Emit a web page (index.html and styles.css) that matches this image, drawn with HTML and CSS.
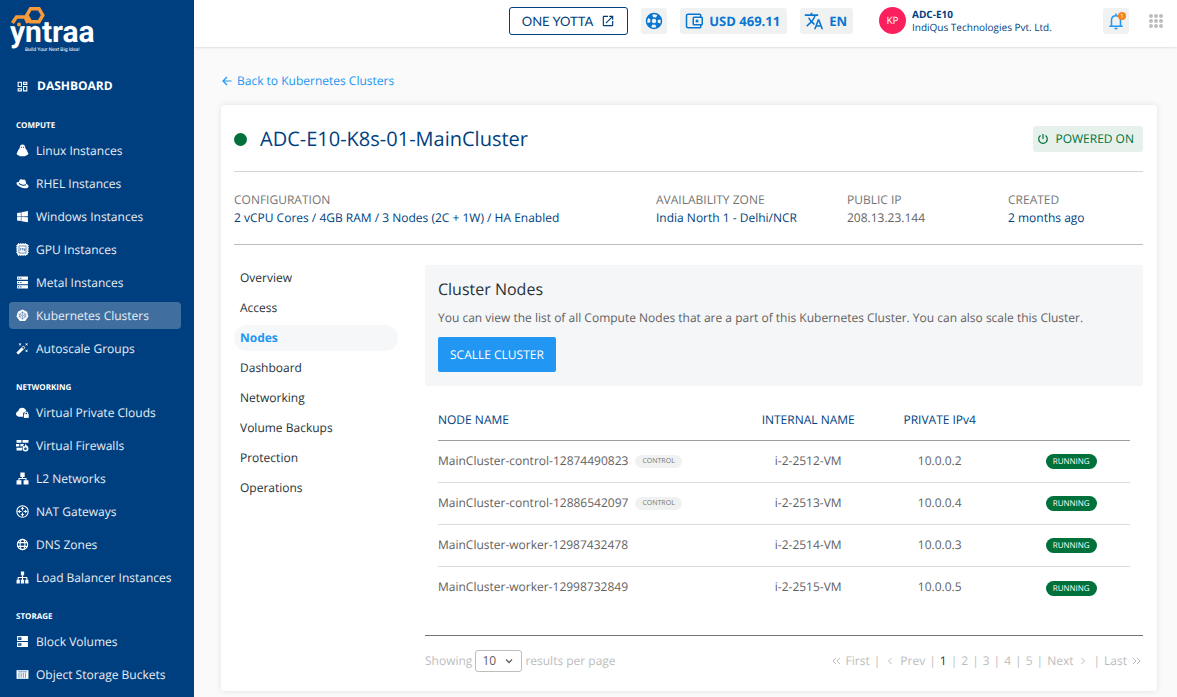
FILE: index.html
```html
<!DOCTYPE html>
<html lang="en">
<head>
<meta charset="utf-8">
<meta name="viewport" content="width=device-width, initial-scale=1">
<title>ADC-E10-K8s-01-MainCluster</title>
<link rel="stylesheet" href="styles.css">
</head>
<body>
<div class="app">
  <aside class="sidebar">
    <a class="logo" href="#" aria-label="yntraa home">
      <svg width="90" height="48" viewBox="0 0 90 48">
        <path d="M2.500 17 6.500 11H15L18 17" fill="none" stroke="#f79a3b" stroke-width="3.500"/>
        <path d="M20.500 2.700H29L32.800 9.200 29 15.700H20.500L16.800 9.200Z" fill="none" stroke="#f79a3b" stroke-width="3.500"/>
        <text class="logo-word" x="0" y="36">yntraa</text>
        <circle cx="9" cy="18.500" r="2" fill="#f79a3b"/>
        <text class="logo-tag" x="15" y="45">Build Your Next Big Idea!</text>
      </svg>
    </a>
    <a class="dash" href="#">
      <svg class="ico" viewBox="0 0 24 24"><path d="M19 5V7H15V5H19M9 5V11H5V5H9M19 13V19H15V13H19M9 17V19H5V17H9M21 3H13V9H21V3M11 3H3V13H11V3M21 11H13V21H21V11M11 15H3V21H11V15Z"/></svg>
      DASHBOARD
    </a>
    <nav class="menu">
      <h2 class="menu-head">COMPUTE</h2>
      <a class="item" href="#"><svg class="ico" viewBox="0 0 24 24"><path d="M12 1C8.500 1 7 3.500 7 6.500 7 9 3 11 2.500 15L1 18 3 20.500 8 22.500H16L21 20.500 23 18 21.500 15C21 11 17 9 17 6.500 17 3.500 15.500 1 12 1Z"/><path class="cut" d="M9 6h2M13 6h2"/></svg>Linux Instances</a>
      <a class="item" href="#"><svg class="ico" viewBox="0 0 24 24"><path d="M5 12C5 7 7 4 9 4 11 4 11 5 13 5 15 4 17 5 18 8L19 13C22 14 24 16 23 18.500 21 22 13 21 8 18.500 3 16 0 13 1 10.500 2 9 4 9 5.500 9.500Z"/><path class="cut" d="M5.500 11.500C8 14.500 14 16.500 18.500 14.500"/></svg>RHEL Instances</a>
      <a class="item" href="#"><svg class="ico" viewBox="0 0 24 24"><path d="M2 12V5.500L9 4.400V11.900L2 12M22 2V11.750L10 11.900V4.200L22 2M2 13L9 13.090V20.500L2 19.200V13M22 13.250V22.500L10 20.700V13.100L22 13.250Z"/></svg>Windows Instances</a>
      <a class="item" href="#"><svg class="ico" viewBox="0 0 24 24"><path class="line" stroke-dasharray="2 2" d="M4 1.200H20M4 22.800H20M1.200 4V20M22.800 4V20"/><rect x="2" y="2" width="20" height="20" rx="2"/><rect class="cut thin" x="5.500" y="5.500" width="13" height="13"/><path class="cut thin" d="M8 14V10H10M11.500 14V10H13V12M15 10V14H16.500V10"/></svg>GPU Instances</a>
      <a class="item" href="#"><svg class="ico" viewBox="0 0 24 24"><path d="M2 1H22V7H2ZM2 9H22V15H2ZM2 17H22V23H2Z"/><path class="cut" d="M4 4H6M8 4H10M4 12H6M8 12H10M4 20H6M8 20H10"/></svg>Metal Instances</a>
      <a class="item active" href="#" aria-current="page"><svg class="ico" viewBox="0 0 24 24"><path d="M12 1 20.500 5 23 14 17 22H7L1 14 3.500 5Z"/><circle class="cut thin" cx="12" cy="12" r="5.500"/><circle class="cut thin" cx="12" cy="12" r="1.500"/><path class="cut thin" d="M12 4V10M12 14V20M4.500 9.500 10 11.500M14 12.500 19.500 14.500M19.500 9.500 14 11.500M10 12.500 4.500 14.500"/></svg>Kubernetes Clusters</a>
      <a class="item" href="#"><svg class="ico" viewBox="0 0 24 24"><path d="M7.500 5.600 5 7 6.400 4.500 5 2 7.500 3.400 10 2 8.600 4.500 10 7 7.500 5.600M19.500 15.400 22 14 20.600 16.500 22 19 19.500 17.600 17 19 18.400 16.500 17 14 19.500 15.400M22 2 20.600 4.500 22 7 19.500 5.600 17 7 18.400 4.500 17 2 19.500 3.400 22 2M13.340 12.780 15.780 10.340 13.660 8.220 11.220 10.660 13.340 12.780M14.370 7.290 16.710 9.630C17.100 10 17.100 10.650 16.710 11.040L5.040 22.710C4.650 23.100 4 23.100 3.630 22.710L1.290 20.370C.9 20 .9 19.350 1.290 18.960L12.960 7.290C13.350 6.900 14 6.900 14.370 7.290Z"/></svg>Autoscale Groups</a>
      <h2 class="menu-head">NETWORKING</h2>
      <a class="item" href="#"><svg class="ico" viewBox="0 0 24 24"><path d="M13 20H6C2.500 20 0 17.500 0 14.500 0 12 2 10 4 9.500 5 5 8 3 11.500 3 15.500 3 18 5.500 19 9.500 15 10 13.500 13 13 14Z"/><path d="M14.500 15H23.500V22H14.500Z"/><path class="line" d="M16.500 15V13C16.500 10.500 21.500 10.500 21.500 13V15"/></svg>Virtual Private Clouds</a>
      <a class="item" href="#"><svg class="ico" viewBox="0 0 24 24"><path d="M1 2H10V7H1ZM12 2H23V7H12ZM0 9H6V14H0ZM8 9H15L12 14H8ZM1 16H11V21H1Z"/><path d="M17 8C17 11 23 13 23 17.500A5.500 5.500 0 0 1 12 17.500C12 15 13.500 14 14 12L16 14C17 12 17 10 17 8Z"/><circle class="cut" cx="17.500" cy="18" r="1.500"/></svg>Virtual Firewalls</a>
      <a class="item" href="#"><svg class="ico" viewBox="0 0 24 24"><path d="M8 1H16V9H8ZM1 15H10V23H1ZM14 15H23V23H14Z"/><path class="line" d="M12 9V12M5.500 16V12H18.500V16"/></svg>L2 Networks</a>
      <a class="item" href="#"><svg class="ico" viewBox="0 0 24 24"><circle class="line" cx="12" cy="12" r="10.500"/><path class="line" d="M12 3V10M12 14V21M3 12H10M14 12H21"/><path d="M8.500 7.500H15.500L12 3.500ZM8.500 16.500H15.500L12 20.500ZM7.500 8.500V15.500L3.500 12ZM16.500 8.500V15.500L20.500 12Z"/></svg>NAT Gateways</a>
      <a class="item" href="#"><svg class="ico" viewBox="0 0 24 24"><circle class="line" cx="12" cy="12" r="9.500"/><ellipse class="line" cx="12" cy="12" rx="4.500" ry="9.500"/><path class="line" d="M3 8.500H21M3 15.500H21"/></svg>DNS Zones</a>
      <a class="item" href="#"><svg class="ico" viewBox="0 0 24 24"><path d="M9 1H15V8H9ZM1 16H7V23H1ZM9 16H15V23H9ZM17 16H23V23H17Z"/><path class="line" d="M12 7V17M4 17V12H20V17"/></svg>Load Balancer Instances</a>
      <h2 class="menu-head">STORAGE</h2>
      <a class="item" href="#"><svg class="ico" viewBox="0 0 24 24"><path d="M2 2H22V11H2ZM2 13H22V22H2Z"/><path class="cut" d="M5 5H9V8H5ZM5 16H9V19H5Z"/></svg>Block Volumes</a>
      <a class="item" href="#"><svg class="ico" viewBox="0 0 24 24"><path d="M1 4H23V20H1Z"/><path class="cut thin" d="M4 7H20M5.500 9V18M9.500 9V18M13.500 9V18M17.500 9V18"/></svg>Object Storage Buckets</a>
    </nav>
  </aside>

  <div class="page">
    <header class="topbar">
      <a class="yotta" href="#">ONE YOTTA
        <svg width="14" height="14" viewBox="0 0 24 24" fill="currentColor"><path d="M14 3V5H17.590L7.760 14.830 9.170 16.240 19 6.410V10H21V3M19 19H5V5H12V3H5C3.890 3 3 3.900 3 5V19A2 2 0 0 0 5 21H19A2 2 0 0 0 21 19V12H19V19Z"/></svg>
      </a>
      <button class="chip" type="button" aria-label="Support">
        <svg width="18" height="18" viewBox="0 0 24 24" fill="none" stroke="currentColor"><circle cx="12" cy="12" r="10" stroke-width="2"/><circle cx="12" cy="12" r="4" stroke-width="2"/><circle cx="12" cy="12" r="7" stroke-width="6" stroke-dasharray="5.500 5.500" stroke-dashoffset="-2.750"/></svg>
      </button>
      <button class="chip wide" type="button">
        <svg width="18" height="18" viewBox="0 0 24 24" fill="none" stroke="currentColor" stroke-width="2"><path d="M21 7V4.500Q21 3 19.500 3H4Q2 3 2 5V19Q2 21 4 21H19.500Q21 21 21 19.500V17"/><rect x="11" y="7" width="12" height="10" rx="1"/><circle cx="16" cy="12" r="1"/></svg>
        USD 469.11
      </button>
      <button class="chip lang" type="button">
        <svg width="20" height="20" viewBox="0 0 24 24" fill="currentColor"><path d="M12.870 15.070 10.330 12.560 10.360 12.530C12.100 10.590 13.340 8.360 14.070 6H17V4H10V2H8V4H1V6H12.170C11.500 7.920 10.440 9.750 9 11.350 8.070 10.320 7.300 9.190 6.690 8H4.690C5.420 9.630 6.420 11.170 7.670 12.560L2.580 17.580 4 19 9 14 12.110 17.110 12.870 15.070M18.500 10H16.500L12 22H14L15.120 19H19.870L21 22H23L18.500 10M15.880 17 17.500 12.670 19.120 17H15.880Z"/></svg>
        EN
      </button>
      <div class="account">
        <span class="avatar">KP</span>
        <div class="who"><strong>ADC-E10</strong><span>IndiQus Technologies Pvt. Ltd.</span></div>
      </div>
      <button class="chip bell" type="button" aria-label="Notifications">
        <svg width="18" height="18" viewBox="0 0 24 24" fill="none" stroke="#2196f3" stroke-width="2"><path d="M6 18V11C6 7 8.500 5 12 5 15.500 5 18 7 18 11V18M3 19H21M12 5V2"/><path d="M10 22H14"/></svg>
        <span class="badge">1</span>
      </button>
      <button class="apps" type="button" aria-label="Apps">
        <svg width="14" height="14" viewBox="0 0 14 14" fill="#bdbdbd"><circle cx="2" cy="2" r="2"/><circle cx="7" cy="2" r="2"/><circle cx="12" cy="2" r="2"/><circle cx="2" cy="7" r="2"/><circle cx="7" cy="7" r="2"/><circle cx="12" cy="7" r="2"/><circle cx="2" cy="12" r="2"/><circle cx="7" cy="12" r="2"/><circle cx="12" cy="12" r="2"/></svg>
      </button>
    </header>

    <main class="main">
      <a class="back" href="#"><svg width="12" height="12" viewBox="0 0 12 12" fill="none" stroke="currentColor" stroke-width="1.200"><path d="M10.500 6H2M6 2 2 6 6 10"/></svg>Back to Kubernetes Clusters</a>
      <section class="card">
        <div class="title-row">
          <span class="dot"></span>
          <h1>ADC-E10-K8s-01-MainCluster</h1>
          <span class="power"><svg width="12" height="12" viewBox="0 0 12 12" fill="none" stroke="currentColor" stroke-width="1.200"><path d="M3.500 2.500A4.300 4.300 0 1 0 8.500 2.500M6 1V6"/></svg>POWERED ON</span>
        </div>
        <dl class="facts">
          <div><dt>CONFIGURATION</dt><dd>2 vCPU Cores / 4GB RAM / 3 Nodes (2C + 1W) / HA Enabled</dd></div>
          <div><dt>AVAILABILITY ZONE</dt><dd>India North 1 - Delhi/NCR</dd></div>
          <div><dt>PUBLIC IP</dt><dd class="plain">208.13.23.144</dd></div>
          <div><dt>CREATED</dt><dd>2 months ago</dd></div>
        </dl>
        <div class="body">
          <nav class="tabs">
            <a href="#">Overview</a>
            <a href="#">Access</a>
            <a class="on" href="#" aria-current="page">Nodes</a>
            <a href="#">Dashboard</a>
            <a href="#">Networking</a>
            <a href="#">Volume Backups</a>
            <a href="#">Protection</a>
            <a href="#">Operations</a>
          </nav>
          <div class="content">
            <div class="panel">
              <h2>Cluster Nodes</h2>
              <p>You can view the list of all Compute Nodes that are a part of this Kubernetes Cluster. You can also scale this Cluster.</p>
              <button class="scale" type="button">SCALLE CLUSTER</button>
            </div>
            <div class="table-wrap">
              <table class="nodes">
                <colgroup><col class="c-name"><col class="c-int"><col class="c-ip"><col class="c-state"></colgroup>
                <thead><tr><th scope="col">NODE NAME</th><th scope="col">INTERNAL NAME</th><th scope="col">PRIVATE IPv4</th><td></td></tr></thead>
                <tbody>
                  <tr><td>MainCluster-control-12874490823<span class="role">CONTROL</span></td><td>i-2-2512-VM</td><td>10.0.0.2</td><td><span class="state">RUNNING</span></td></tr>
                  <tr><td>MainCluster-control-12886542097<span class="role">CONTROL</span></td><td>i-2-2513-VM</td><td>10.0.0.4</td><td><span class="state">RUNNING</span></td></tr>
                  <tr><td>MainCluster-worker-12987432478</td><td>i-2-2514-VM</td><td>10.0.0.3</td><td><span class="state">RUNNING</span></td></tr>
                  <tr><td>MainCluster-worker-12998732849</td><td>i-2-2515-VM</td><td>10.0.0.5</td><td><span class="state">RUNNING</span></td></tr>
                </tbody>
              </table>
            </div>
            <div class="foot">
              <div class="per-page">
                <label for="size">Showing</label>
                <span class="pick">
                  <select id="size"><option>10</option><option>25</option><option>50</option></select>
                  <svg width="8" height="8" viewBox="0 0 8 8" fill="none" stroke="#616161" stroke-width="1.300"><path d="M1 2.500 4 5.500 7 2.500"/></svg>
                </span>
                <span>results per page</span>
              </div>
              <nav class="pages" aria-label="Pagination">
                <svg viewBox="0 0 12 12"><path d="M6 3 3 6 6 9M10 3 7 6 10 9"/></svg><a href="#">First</a><span>|</span>
                <svg viewBox="0 0 12 12"><path d="M7.500 3 4.500 6 7.500 9"/></svg><a href="#">Prev</a><span>|</span>
                <a class="cur" href="#" aria-current="page">1</a><span>|</span>
                <a href="#">2</a><span>|</span>
                <a href="#">3</a><span>|</span>
                <a href="#">4</a><span>|</span>
                <a href="#">5</a><span>|</span>
                <a href="#">Next</a><svg viewBox="0 0 12 12"><path d="M4.500 3 7.500 6 4.500 9"/></svg><span>|</span>
                <a href="#">Last</a><svg viewBox="0 0 12 12"><path d="M2 3 5 6 2 9M6 3 9 6 6 9"/></svg>
              </nav>
            </div>
          </div>
        </div>
      </section>
    </main>
  </div>
</div>
</body>
</html>
```
FILE: styles.css
```css
* { box-sizing: border-box; }
body {
  margin: 0;
  background: #fafafa;
  color: #616161;
  font: 12px/18px "Open Sans", "Noto Sans", sans-serif;
  text-rendering: geometricPrecision;
}
a { color: inherit; text-decoration: none; }
button { border: 0; font: inherit; text-rendering: inherit; cursor: pointer; }
h1, h2, p, dl, dd { margin: 0; }
svg { flex: none; display: block; }

.app { display: flex; min-height: 100vh; }

/* Sidebar */
.sidebar {
  flex: none;
  width: 194px;
  padding: 6px 13px 0 9px;
  background: #003f7f;
  color: #fff;
}
.logo { display: block; padding-left: 1px; }
.logo-word { fill: #fff; font: 700 30px Roboto, sans-serif; }
.logo-tag { fill: #fff; font: 5px Roboto, sans-serif; }
.dash {
  display: flex;
  align-items: center;
  gap: 8px;
  height: 20px;
  margin: 22px 0;
  padding-left: 7px;
  font-weight: 700;
}
.ico { width: 13px; height: 13px; fill: currentColor; }
.ico .line { fill: none; stroke: currentColor; stroke-width: 2; }
.ico .cut { fill: none; stroke: #003f7f; stroke-width: 2; }
.ico .thin { stroke-width: 1; }
.menu { display: flex; flex-direction: column; }
.menu-head {
  margin: 0 0 3px;
  padding-left: 7px;
  font-size: 8px;
  line-height: 16px;
  font-weight: 700;
}
.item + .menu-head { margin-top: 12px; }
.item {
  display: flex;
  align-items: center;
  gap: 7px;
  height: 27px;
  margin-bottom: 6px;
  padding-left: 7px;
  border-radius: 4px;
  color: #e8eef5;
}
.item .ico { color: #fff; }
.item.active { background: #406f9f; }
.item.active .cut { stroke: #406f9f; }

/* Top bar */
.page { flex: 1; min-width: 0; }
.topbar {
  display: flex;
  align-items: center;
  justify-content: flex-end;
  height: 47px;
  padding: 0 14px 6px 0;
  background: #fff;
  box-shadow: 0 0 3px rgba(0, 0, 0, .2);
}
.yotta {
  display: flex;
  align-items: center;
  gap: 8px;
  height: 28px;
  margin-right: 13px;
  padding: 0 12px;
  border: 1px solid #003f7f;
  border-radius: 3px;
  color: #003f7f;
  font: 13px/26px Lato, sans-serif;
}
.chip {
  display: flex;
  align-items: center;
  gap: 5px;
  height: 26px;
  margin-right: 13px;
  padding: 0 4px;
  border-radius: 3px;
  background: #f0f2f2;
  color: #0875d1;
  font-size: 13px;
  font-weight: 700;
}
.chip.wide { padding: 0 7px 0 5px; gap: 6px; }
.chip.lang { margin-right: 26px; padding: 0 6px 0 4px; }
.account { display: flex; align-items: center; gap: 6px; width: 210px; margin-right: 14px; color: #003f7f; }
.avatar {
  flex: none;
  width: 27px;
  border-radius: 50%;
  background: #fc1f5e;
  color: #fff;
  font-size: 10px;
  line-height: 27px;
  text-align: center;
}
.who { display: flex; flex-direction: column; font-size: 10px; line-height: 13px; white-space: nowrap; }
.chip.bell { position: relative; margin-right: 20px; }
.badge {
  position: absolute;
  top: 4px;
  right: 3px;
  width: 8px;
  border-radius: 50%;
  background: #f58220;
  color: #fff;
  font-size: 6px;
  line-height: 8px;
  font-weight: 400;
}
.apps { padding: 0; background: none; }

/* Page body */
.main { padding: 25px 20px 6px 27px; }
.back { display: flex; align-items: center; gap: 4px; color: #2196f3; }
.card {
  margin-top: 15px;
  padding: 0 14px 0 13px;
  border-radius: 4px;
  background: #fff;
  box-shadow: 0 0 6px rgba(0, 0, 0, .1);
}
.title-row {
  display: flex;
  align-items: center;
  gap: 13px;
  padding: 20px 0 18px;
  border-bottom: 1px solid #d4d4d4;
}
.dot { width: 13px; height: 13px; border-radius: 50%; background: #00713a; }
h1 { flex: 1; color: #003f7f; font-size: 20px; line-height: 28px; font-weight: 400; }
.power {
  display: flex;
  align-items: center;
  gap: 6px;
  height: 26px;
  padding: 0 9px 0 4px;
  border-radius: 3px;
  background: #e6f1eb;
  color: #00713a;
}
.facts {
  display: grid;
  grid-template-columns: 422fr 191fr 161fr 135fr;
  padding: 19px 0 17px;
  border-bottom: 1px solid #bdbdbd;
}
dt { color: #757575; }
dd { color: #003f7f; }
dd.plain { color: #616161; }
.body { display: flex; gap: 27px; padding-top: 20px; }
.tabs { display: flex; flex-direction: column; gap: 4px; flex: none; width: 164px; color: #263238; }
.tabs a { padding: 0 6px; border-radius: 13px; line-height: 26px; }
.tabs .on { background: #f5f7f9; color: #2196f3; font-weight: 700; }
.content { flex: 1; min-width: 0; }
.panel { padding: 13px 13px 14px; border-radius: 3px; background: #f5f6f8; }
.panel h2 { color: #263238; font-size: 16px; line-height: 22px; font-weight: 400; }
.panel p { margin: 9px 0 10px; }
.scale {
  height: 35px;
  padding: 0 12px;
  border-radius: 2px;
  background: #2196f3;
  color: #fff;
}
.table-wrap { padding: 14px 13px 27px; }
.nodes { width: 100%; border-collapse: collapse; table-layout: fixed; }
.c-name { width: 45%; }
.c-int { width: 17%; }
.c-ip { width: 21%; }
.c-state { width: 17%; }
.nodes th, .nodes td { height: 42px; padding: 0; text-align: center; font-weight: 400; }
.nodes thead th, .nodes thead td { height: 40px; color: #003f7f; }
.nodes th:first-child, .nodes td:first-child { text-align: left; white-space: nowrap; }
.nodes thead tr { border-bottom: 1px solid #9e9e9e; }
.nodes tbody tr + tr { border-top: 1px solid #dcdcdc; }
.role, .state { display: inline-block; vertical-align: middle; border-radius: 8px; }
.role {
  margin-left: 7px;
  padding: 0 7px;
  background: #f0f2f2;
  color: #757575;
  font-size: 7px;
  line-height: 13px;
}
.state { padding: 0 7px; background: #00713a; color: #fff; font-size: 8px; line-height: 15px; }
.foot {
  display: flex;
  align-items: center;
  justify-content: space-between;
  padding: 14px 0 19px;
  border-top: 1px solid #757575;
  color: #bdbdbd;
}
.per-page { display: flex; align-items: center; gap: 3px; }
.pick { display: grid; align-items: center; }
.pick > * { grid-area: 1 / 1; }
.pick svg { justify-self: end; margin-right: 9px; pointer-events: none; }
.pick select {
  width: 47px;
  height: 22px;
  padding: 0 6px;
  appearance: none;
  border: 1px solid #bdbdbd;
  border-radius: 3px;
  background: #fff;
  color: #616161;
  font: inherit;
}
.pages { display: flex; align-items: center; gap: 4px; }
.pages svg { width: 12px; height: 12px; fill: none; stroke: #bdbdbd; }
.pages .cur { color: #263238; }
```
